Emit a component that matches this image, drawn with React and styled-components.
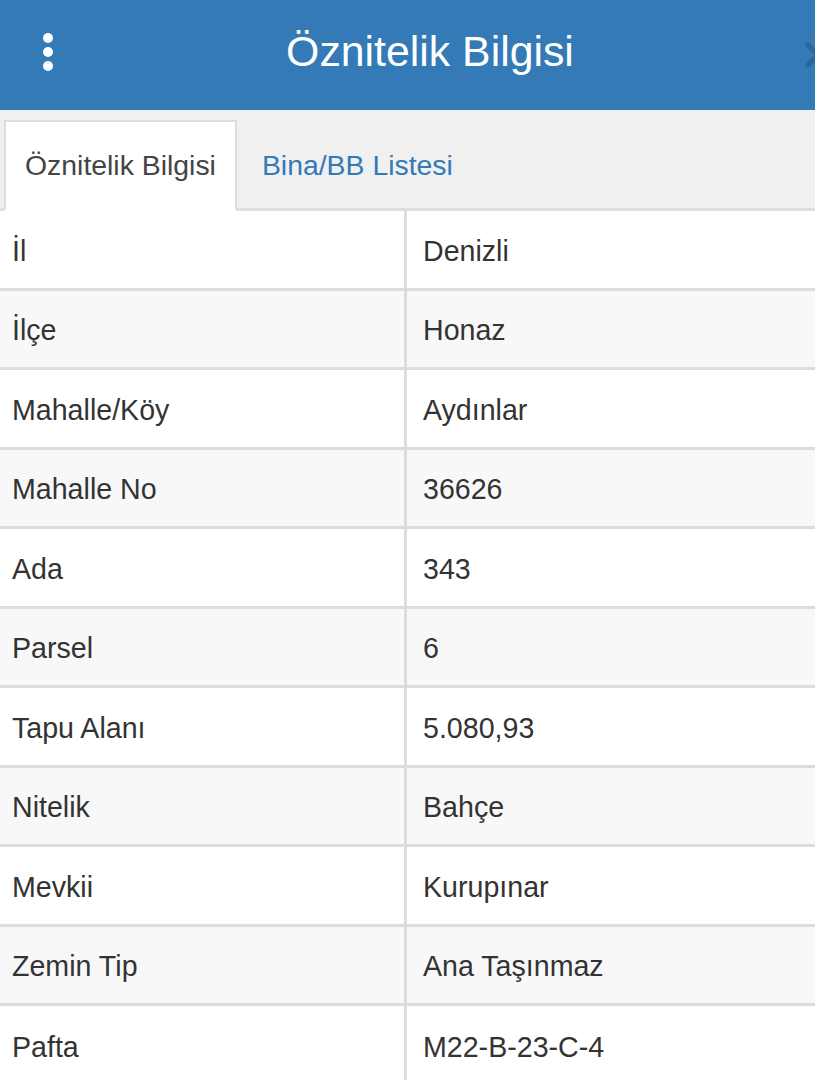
import React from "react";
import styled, { createGlobalStyle } from "styled-components";

const Global = createGlobalStyle`
  html, body { margin: 0; padding: 0; background: #ffffff; overflow-x: hidden; }
  body { font-family: "Liberation Sans", Arimo, Arial, sans-serif; }
  * { box-sizing: border-box; }
`;

const Page = styled.div`
  width: 815px;
  overflow: hidden;
  font-family: "Liberation Sans", Arial, sans-serif;
`;

const Header = styled.header`
  height: 110px;
  background: #337ab7;
  display: grid;
  grid-template-columns: 96px 1fr 51px;
  align-items: center;
  overflow: hidden;
`;

const MenuButton = styled.div`
  display: flex;
  flex-direction: column;
  align-items: center;
  justify-content: center;
  gap: 4px;
  width: 96px;
  padding-bottom: 6px;
`;

const Dot = styled.span`
  width: 10px;
  height: 10px;
  border-radius: 50%;
  background: #ffffff;
`;

const Title = styled.h1`
  margin: 0;
  text-align: center;
  color: #ffffff;
  font-family: "Liberation Sans", Arial, sans-serif;
  font-weight: 400;
  font-size: 42.8px;
  padding-bottom: 8px;
`;

const CloseWrap = styled.div`
  display: flex;
  justify-content: flex-start;
  padding-left: 41px;
  overflow: hidden;
  svg { flex-shrink: 0; }
`;

const TabStrip = styled.nav`
  height: 101px;
  background: #f0f0f0;
  border-bottom: 3px solid #dddddd;
  display: flex;
  align-items: flex-end;
  padding-left: 4px;
  gap: 4px;
`;

const Tab = styled.div`
  height: 91px;
  margin-bottom: -3px;
  display: flex;
  align-items: center;
  padding: 0 19px 0 19px;
  font-family: "Liberation Sans", Arial, sans-serif;
  font-size: 28.4px;
  color: ${(p) => (p.$active ? "#444444" : "#337ab7")};
  background: ${(p) => (p.$active ? "#ffffff" : "transparent")};
  border: 2px solid ${(p) => (p.$active ? "#dddddd" : "transparent")};
  border-bottom-color: ${(p) => (p.$active ? "#ffffff" : "transparent")};
`;

const Table = styled.div`
  display: flex;
  flex-direction: column;
`;

const Row = styled.div`
  display: grid;
  grid-template-columns: 404px 1fr;
  height: 79.5px;
  border-bottom: 3px solid #dcdcdc;
  background: ${(p) => (p.$striped ? "#f9f8f9" : "#ffffff")};
  &:last-child { border-bottom: none; }
`;

const Cell = styled.div`
  display: flex;
  align-items: center;
  font-family: "Liberation Sans", Arial, sans-serif;
  font-size: 28.6px;
  color: #333333;
  padding-top: 4px;
  padding-left: ${(p) => (p.$value ? "16px" : "12px")};
  border-left: ${(p) => (p.$value ? "3px solid #dcdcdc" : "none")};
`;

const rows = [
  ["İl", "Denizli"],
  ["İlçe", "Honaz"],
  ["Mahalle/Köy", "Aydınlar"],
  ["Mahalle No", "36626"],
  ["Ada", "343"],
  ["Parsel", "6"],
  ["Tapu Alanı", "5.080,93"],
  ["Nitelik", "Bahçe"],
  ["Mevkii", "Kurupınar"],
  ["Zemin Tip", "Ana Taşınmaz"],
  ["Pafta", "M22-B-23-C-4"],
];

export default function App() {
  return (
    <Page>
      <Global />
      <Header>
        <MenuButton>
          <Dot />
          <Dot />
          <Dot />
        </MenuButton>
        <Title>Öznitelik Bilgisi</Title>
        <CloseWrap>
          <svg width="26" height="26" viewBox="0 0 26 26">
            <path d="M3 3 L23 23 M23 3 L3 23" stroke="#2a66a0" strokeWidth="5" strokeLinecap="round" />
          </svg>
        </CloseWrap>
      </Header>
      <TabStrip>
        <Tab $active>Öznitelik Bilgisi</Tab>
        <Tab>Bina/BB Listesi</Tab>
      </TabStrip>
      <Table>
        {rows.map(([k, v], i) => (
          <Row key={k} $striped={i % 2 === 1}>
            <Cell>{k}</Cell>
            <Cell $value>{v}</Cell>
          </Row>
        ))}
      </Table>
    </Page>
  );
}
